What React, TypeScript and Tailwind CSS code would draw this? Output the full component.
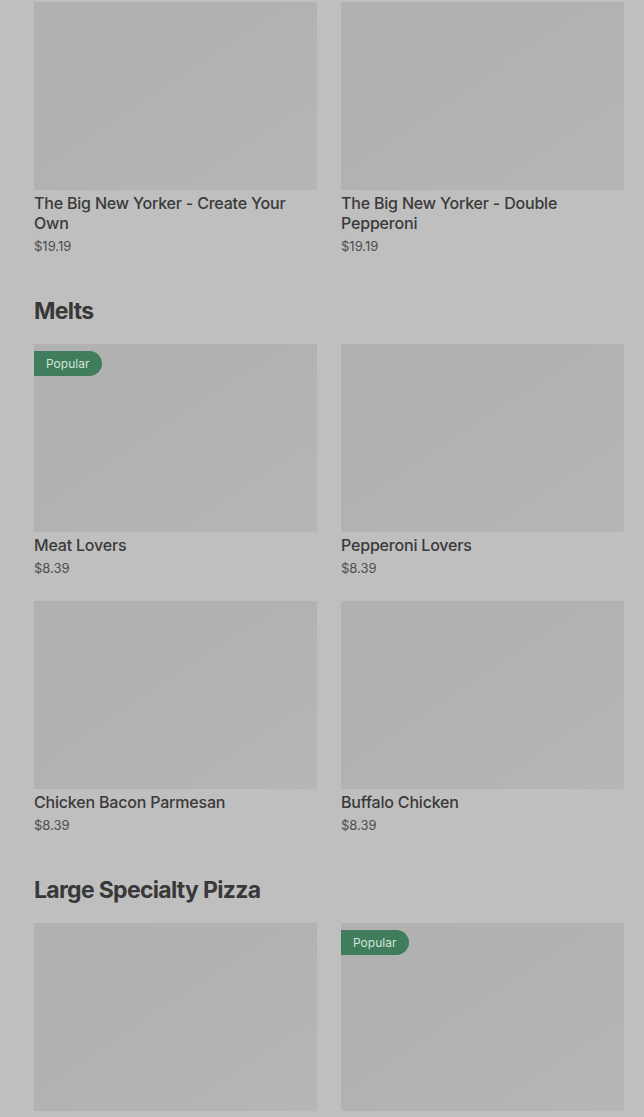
import React from 'react';

interface Item {
  name: string;
  price: string;
  popular?: boolean;
}

interface Section {
  title?: string;
  items: Item[];
}

const sections: Section[] = [
  {
    items: [
      { name: 'The Big New Yorker - Create Your Own', price: '$19.19' },
      { name: 'The Big New Yorker - Double Pepperoni', price: '$19.19' },
    ],
  },
  {
    title: 'Melts',
    items: [
      { name: 'Meat Lovers', price: '$8.39', popular: true },
      { name: 'Pepperoni Lovers', price: '$8.39' },
      { name: 'Chicken Bacon Parmesan', price: '$8.39' },
      { name: 'Buffalo Chicken', price: '$8.39' },
    ],
  },
  {
    title: 'Large Specialty Pizza',
    items: [
      { name: "Pepperoni Lover's® Pizza", price: '$18.39' },
      { name: "Meat Lover's® Pizza", price: '$18.39', popular: true },
    ],
  },
];

function ItemCard({ item }: { item: Item }) {
  return (
    <div className="flex flex-col">
      {/* Image placeholder */}
      <div className="relative h-[188px] w-full bg-gradient-to-br from-[#b1b1b1] via-[#b2b2b2] to-[#b6b6b6]">
        {item.popular && (
          <span className="absolute left-0 top-[7px] flex h-[25px] items-center rounded-r-full bg-[#3f7d5c] pl-3 pr-[13px] text-[12px] text-[#d3e3da]">
            Popular
          </span>
        )}
      </div>
      <div className="mt-[3px] text-[16px] font-medium leading-5 tracking-[-0.012em] text-[#3a3a3a]">{item.name}</div>
      <div className="mt-1 text-[13px] leading-[18px] text-[#4e4e4e]">{item.price}</div>
    </div>
  );
}

export default function App() {
  return (
    <div
      className="min-h-[1117px] w-full overflow-hidden bg-[#bfbfbf] pl-[34px] pr-[20px] pt-[2px]"
      style={{ fontFamily: 'Inter, "Noto Sans", sans-serif' }}
    >
      {sections.map((section, i) => (
        <div key={i} className="flex flex-col">
          {section.title && (
            <h2 className="pb-[17px] pt-[40px] text-[23px] font-bold leading-8 tracking-[-0.03em] text-[#383838]">
              {section.title}
            </h2>
          )}
          <div className="grid grid-cols-2 gap-x-6 gap-y-6">
            {section.items.map((item) => (
              <ItemCard key={item.name} item={item} />
            ))}
          </div>
        </div>
      ))}
    </div>
  );
}
